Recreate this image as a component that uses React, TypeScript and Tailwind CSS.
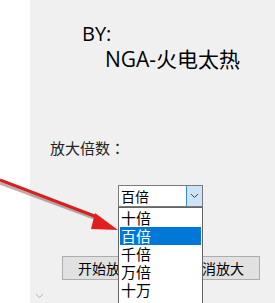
import React from "react";

const cjk = { fontFamily: '"Noto Sans CJK SC", "Noto Sans", sans-serif' };
const latin = { fontFamily: '"Open Sans", "Noto Sans CJK SC", sans-serif' };
const label = { fontFamily: '"Noto Sans CJK TC", "Noto Sans CJK SC", sans-serif' };

const options = ["十倍", "百倍", "千倍", "万倍", "十万"];

const App = () => {
  return (
    <div className="relative flex w-[275px] h-[303px] overflow-hidden bg-white" style={cjk}>
      <div className="w-[30px] bg-white" />
      <div className="flex-1 flex flex-col bg-[#f0f0f0]">
        <div className="pl-[52px] pt-[22px] text-[20px] leading-[24px] text-black" style={latin}>
          BY:
        </div>
        <div className="pl-[75px] pt-[1px] text-[21px] leading-[25px] text-black" style={latin}>
          NGA-火电太热
        </div>
        <div className="pl-[20px] pt-[66px] text-[15px] leading-[20px] text-[#222]" style={label}>
          放大倍数：
        </div>
        <div className="pl-[88px] pt-[27px]">
          <div className="flex w-[85px] h-[22px] border border-[#7a7a7a] bg-white">
            <div className="flex-1 pl-[2px] text-[14px] leading-[20px] text-black">百倍</div>
            <div className="w-[16px] h-full flex items-center justify-center bg-[#cce4f7] border-l border-[#3d8ad2]">
              <svg width="9" height="6" viewBox="0 0 9 6">
                <path d="M1 1 L4.5 4.5 L8 1" fill="none" stroke="#444" strokeWidth="1" />
              </svg>
            </div>
          </div>
        </div>
        <div className="flex gap-[22px] pl-[32px] pt-[49px]">
          <button className="w-[88px] h-[24px] border border-[#adadad] bg-[#e1e1e1] text-[14px] leading-[20px] text-black">
            开始放大
          </button>
          <button className="w-[88px] h-[24px] border border-[#adadad] bg-[#e1e1e1] text-[14px] leading-[20px] text-black">
            取消放大
          </button>
        </div>
        <div className="pl-[5px] pt-[13px]">
          <svg width="9" height="6" viewBox="0 0 9 6">
            <path d="M1 1 L4.5 4.5 L8 1" fill="none" stroke="#b0b0b0" strokeWidth="1" />
          </svg>
        </div>
      </div>

      {/* dropdown list popup */}
      <div className="absolute left-[118px] top-[207px] w-[85px] h-[100px] border border-[#646464] bg-white p-[1px]">
        {options.map((o) => (
          <div
            key={o}
            className={
              o === "百倍"
                ? "h-[18px] pl-[1px] text-[15px] leading-[18px] bg-[#0078d7] text-white"
                : "h-[18px] pl-[1px] text-[15px] leading-[18px] text-black"
            }
          >
            {o}
          </div>
        ))}
      </div>

      {/* red annotation arrow */}
      <svg className="absolute left-0 top-0" width="275" height="303" viewBox="0 0 275 303">
        <line x1="0" y1="181" x2="97" y2="217" stroke="#5a1010" strokeOpacity="0.35" strokeWidth="4" transform="translate(0,1.5)" />
        <line x1="0" y1="180" x2="97" y2="217" stroke="#d61f1f" strokeWidth="3" />
        <polygon points="118,230 95,213 91,229" fill="#e02020" />
      </svg>
    </div>
  );
};

export default App;
